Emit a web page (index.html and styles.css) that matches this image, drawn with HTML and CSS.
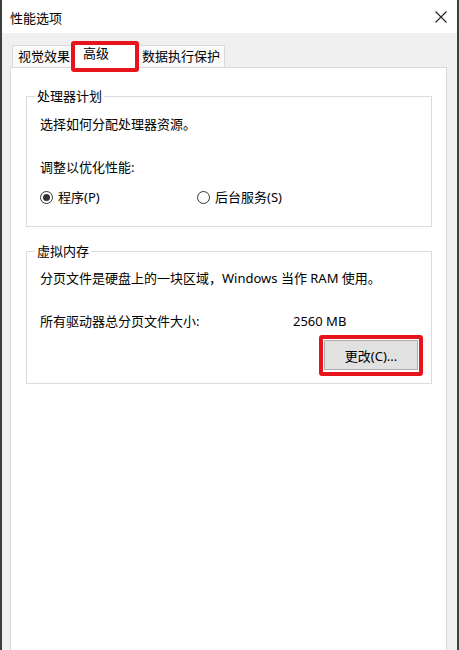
FILE: index.html
```html
<!DOCTYPE html>
<html lang="zh-CN">
<head>
<meta charset="utf-8">
<title>性能选项</title>
<link rel="stylesheet" href="styles.css">
</head>
<body>
<div class="window">
  <div class="titlebar">
    <span class="title">性能选项</span>
    <svg class="close" width="12" height="12" viewBox="0 0 12 12"><path d="M0.5 0.5 L11.5 11.5 M11.5 0.5 L0.5 11.5" stroke="#222" stroke-width="1.1" fill="none"/></svg>
  </div>
  <div class="body">
    <div class="tabs">
      <div class="tab tab1">视觉效果</div>
      <div class="tab tab-active">高级<span class="mark mark-tab"></span></div>
      <div class="tab tab3">数据执行保护</div>
    </div>
    <div class="panel">
      <fieldset class="group group1">
        <legend>处理器计划</legend>
        <p class="line">选择如何分配处理器资源。</p>
        <p class="line gap25">调整以优化性能:</p>
        <div class="radios">
          <label class="radio first"><span class="dot checked"></span>程序(P)</label>
          <label class="radio"><span class="dot"></span>后台服务(S)</label>
        </div>
      </fieldset>
      <fieldset class="group group2">
        <legend>虚拟内存</legend>
        <p class="line">分页文件是硬盘上的一块区域，Windows 当作 RAM 使用。</p>
        <div class="line gap25 size-row">
          <span>所有驱动器总分页文件大小:</span>
          <span>2560 MB</span>
        </div>
        <div class="btn-row">
          <div class="btn">更改(C)...<span class="mark mark-btn"></span></div>
        </div>
      </fieldset>
    </div>
  </div>
</div>
</body>
</html>
```

FILE: styles.css
```css
html, body {
  margin: 0;
  padding: 0;
}
body {
  width: 459px;
  height: 650px;
  overflow: hidden;
  font-family: "Noto Sans", "Noto Sans CJK SC", sans-serif;
  font-size: 13px;
  color: #000;
}
.window {
  box-sizing: border-box;
  height: 650px;
  border-left: 2px solid #3e3e3e;
  border-right: 2px solid #3e3e3e;
  background: #f0f0f0;
  display: flex;
  flex-direction: column;
}
.titlebar {
  height: 33px;
  flex: none;
  background: #fff;
  display: flex;
  align-items: center;
  justify-content: space-between;
  padding: 0 10px 0 8px;
}
.title {
  line-height: 18px;
  margin-top: 2px;
}
.close {
  display: block;
  margin-top: 1px;
}
.body {
  flex: 1;
  display: flex;
  flex-direction: column;
  padding: 9px 10px 0 8px;
}
.tabs {
  display: flex;
  align-items: flex-end;
  height: 26px;
  padding-left: 2px;
}
.tab {
  box-sizing: border-box;
  height: 23px;
  border: 1px solid #d9d9d9;
  border-bottom: none;
  background: #fafafa;
  line-height: 21px;
  padding-left: 5px;
  white-space: nowrap;
}
.tab1 {
  width: 60px;
  border-right: none;
}
.tab3 {
  width: 87px;
  padding-left: 4px;
  border-left: none;
}
.tab-active {
  position: relative;
  z-index: 2;
  width: 66px;
  height: 26px;
  background: #fff;
  padding-left: 10px;
  line-height: 20px;
}
.mark {
  position: absolute;
  border: 4px solid #e8141b;
  border-radius: 3px;
  pointer-events: none;
}
.mark-tab {
  top: -2px;
  left: -2px;
  right: -2px;
  bottom: -4px;
}
.panel {
  flex: 1;
  margin-top: -1px;
  border: 1px solid #d9d9d9;
  border-bottom: none;
  background: #fff;
  padding: 0 14px 0 15px;
}
.group {
  margin: 0;
  border: 1px solid #dcdcdc;
  padding: 11px 13px 20px 13px;
  min-width: 0;
}
.group1 {
  margin-top: 20px;
}
.group2 {
  margin-top: 16px;
  padding-top: 10px;
  padding-bottom: 13px;
}
.group legend {
  line-height: 16px;
  padding: 0 2px;
  margin-left: -5px;
}
.line {
  margin: 0;
  line-height: 18px;
}
.gap25 {
  margin-top: 25px;
}
.radios {
  display: flex;
  margin-top: 12px;
  line-height: 18px;
}
.radio {
  display: flex;
  align-items: center;
  gap: 5px;
}
.radio.first {
  width: 157px;
}
.dot {
  box-sizing: border-box;
  width: 13px;
  height: 13px;
  border: 1px solid #333;
  border-radius: 50%;
  display: flex;
  align-items: center;
  justify-content: center;
}
.dot.checked::after {
  content: "";
  width: 7px;
  height: 7px;
  border-radius: 50%;
  background: #333;
}
.size-row {
  display: grid;
  grid-template-columns: 253px auto;
}
.btn-row {
  display: flex;
  justify-content: flex-end;
  margin-top: 10px;
}
.btn {
  position: relative;
  box-sizing: border-box;
  width: 94px;
  height: 30px;
  background: #e1e1e1;
  border: 1px solid #adadad;
  display: flex;
  align-items: center;
  justify-content: center;
}
.mark-btn {
  top: -6px;
  left: -6px;
  right: -6px;
  bottom: -7px;
}
```
